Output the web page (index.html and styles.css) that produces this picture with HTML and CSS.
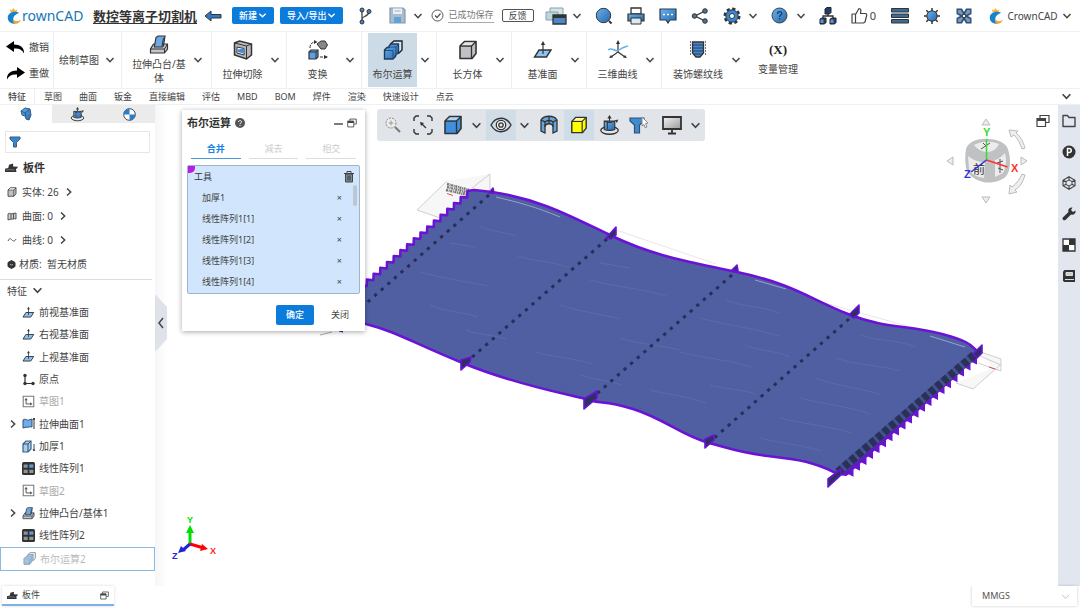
FILE: index.html
```html
<!DOCTYPE html>
<html lang="zh-CN">

<head>
    <meta charset="UTF-8">
    <meta name="viewport" content="width=device-width, initial-scale=1.0">
    <title>CrownCAD - 数控等离子切割机</title>
    <link rel="stylesheet" href="styles.css">
</head>

<body>
    <!-- 公用图标 -->
    <svg class="defs" width="0" height="0" aria-hidden="true">
        <defs>
            <linearGradient id="blue" x1="0" y1="0" x2="1" y2="1">
                <stop offset="0" stop-color="#6cb2f0" />
                <stop offset="1" stop-color="#2566a8" />
            </linearGradient>
            <linearGradient id="gray" x1="0" y1="0" x2="1" y2="1">
                <stop offset="0" stop-color="#f4f4f4" />
                <stop offset="1" stop-color="#999" />
            </linearGradient>
        </defs>
        <symbol id="i-down" viewBox="0 0 10 10"><path d="M1.5 3 5 6.7 8.5 3" fill="none" stroke="#444" stroke-width="1.5" /></symbol>
        <symbol id="i-right" viewBox="0 0 10 10"><path d="M3 1.5 6.7 5 3 8.5" fill="none" stroke="#444" stroke-width="1.5" /></symbol>
        <symbol id="i-crown" viewBox="0 0 16 18">
            <path d="M3 1.5 5 3 7 .5 8.5 3 11 2 10 5.5H4z" fill="#f6b03a" />
            <path d="M13 5.500C7 3 1 6 .8 10.500.6 14.500 4 17.500 9 17.200 5.500 14.500 5 8.500 13 5.500z" fill="#1484d2" />
            <path d="M6.500 12c2 3.500 5.500 3.500 8.500.5-1 3.500-4 5.500-8 4.500" fill="#f0a02c" />
        </symbol>
        <symbol id="i-plane" viewBox="0 0 20 20">
            <path d="M6 10h12l-4.500 7H1.500z" fill="#8fc1f2" stroke="#333" stroke-width="1.4" />
            <path d="M10 14V3" stroke="#333" stroke-width="1.2" /><path d="M10 1 7.800 5h4.400z" fill="#333" />
        </symbol>
        <symbol id="i-sketch" viewBox="0 0 16 16">
            <path d="M1.500 1.500h13v13h-13z" fill="#fff" stroke="#777" stroke-width="1.3" />
            <path d="M5 5v6h6" fill="none" stroke="#555" stroke-width="1.2" /><path d="M3 6.500 5 3.500 7 6.500M10 9l3 2-3 2" fill="#555" />
        </symbol>
        <symbol id="i-array" viewBox="0 0 16 16">
            <rect x="0" y="0" width="16" height="16" rx="2" fill="#333" />
            <path d="M2 3h5v4H2zM2 9.500h5v4H2zM9 9.500h5v4H9z" fill="#8e9499" /><path d="M9 3h5v4H9z" fill="#5b9be0" />
        </symbol>
        <symbol id="i-extrude" viewBox="0 0 20 20">
            <path d="M4.500 9 1.500 14v4h14l3-4V9z" fill="#c3c7cb" stroke="#333" stroke-width="1.2" />
            <path d="M1.500 14h14l3-5M15.500 14v4" fill="none" stroke="#333" />
            <path d="M5.500 11 7 2.500l2-1.500h7l-1.500 9.500-1 1.500h-8z" fill="#6fa8e4" stroke="#333" stroke-width="1.2" />
            <path d="m13 11.500 1.500-8.500" stroke="#333" />
        </symbol>
        <symbol id="i-bool" viewBox="0 0 20 20">
            <path d="M7.500 4 11 1h8v9l-3 3H7.500z" fill="#d7e7f6" stroke="#222" stroke-width="1.4" />
            <path d="M1.500 10 4 7.500h2V6l2-2h7.500v8.500l-3 3v1L10 19H1.500z" fill="url(#blue)" stroke="#1c3a5c" stroke-width="1.4" />
            <path d="M2 10.500h8V19M6 7h7v8M13 7l3-3" fill="none" stroke="#1f5084" />
        </symbol>
        <symbol id="i-cube" viewBox="0 0 20 20">
            <path d="M2 6 6.500 1.500H18v12L14 18.500H2z" fill="currentColor" stroke="#333" stroke-width="1.6" stroke-linejoin="round" />
            <path d="M2 6h11.500v12.500M13.500 6 18 1.500" fill="none" stroke="#333" stroke-width="1.3" />
            <path d="m3.500 5.300 3.400-3.100h9.300L13 5.300z" fill="#fff" opacity=".6" />
        </symbol>
        <symbol id="i-windows" viewBox="0 0 14 14">
            <path d="M4 4V1.500h9v7h-3" fill="none" stroke="#444" stroke-width="1.2" />
            <path d="M1 4.500h8.500v8H1z" fill="#fff" stroke="#444" stroke-width="1.2" /><path d="M1 4h8.500v3H1z" fill="#444" />
        </symbol>
        <symbol id="i-part" viewBox="0 0 16 12">
            <path d="M0 11V7l4-1 1-4 5-1.500V4l6 .5-1.500 2.500h-1L14 11z" fill="#333" /><path d="m1 8.500 5-.5 6 .5" stroke="#888" fill="none" />
        </symbol>
        <symbol id="i-turn" viewBox="0 0 24 24">
            <ellipse cx="12" cy="17.500" rx="10" ry="4.500" fill="none" stroke="#333" stroke-width="1.5" />
            <path d="M6 7h12v9.500c-3 1.500-9 1.500-12 0z" fill="url(#blue)" stroke="#333" stroke-width="1.3" />
            <path d="M6 7c3 2 9 2 12 0M12 1.500V7M9.500 7v9.500" fill="none" stroke="#333" stroke-width="1.2" /><path d="m12 0-2.500 4h5zM22 5l-4 1 2.500 3z" fill="#333" />
        </symbol>
    </svg>

    <header class="header">
        <a class="logo" href="#"><svg width="15" height="18"><use href="#i-crown" /></svg>rownCAD</a>
        <h1 class="doc-name">数控等离子切割机</h1>
        <button class="back" aria-label="返回"><svg width="18" height="12" viewBox="0 0 18 12"><path d="M7 1 1 6l6 5V8h10V4.500H7z" fill="#2e7ac8" stroke="#333" /></svg></button>
        <button class="primary">新建<svg width="9" height="9" viewBox="0 0 10 10"><path d="M1.500 3 5 6.500 8.500 3" fill="none" stroke="#fff" stroke-width="1.5" /></svg></button>
        <button class="primary">导入/导出<svg width="9" height="9" viewBox="0 0 10 10"><path d="M1.500 3 5 6.500 8.500 3" fill="none" stroke="#fff" stroke-width="1.5" /></svg></button>
        <button class="icon-btn" aria-label="版本"><svg width="14" height="18" viewBox="0 0 14 18"><path d="M4 3v11M4 12c0-3 6-2 7-7" fill="none" stroke="#444" stroke-width="1.3" /><g fill="#3b86d0" stroke="#333"><circle cx="4" cy="3" r="2" /><circle cx="11" cy="4.500" r="2" /><circle cx="4" cy="15" r="2" /></g></svg></button>
        <button class="icon-btn" aria-label="保存"><svg width="17" height="17" viewBox="0 0 17 17"><path d="M1 1h13l2 2v13H1z" fill="#a9bdd2" stroke="#8796a5" stroke-width="1.2" /><path d="M4 1.500h9V7H4z" fill="#edf2f7" /><path d="M5 10h7v6H5z" fill="#62a3d6" /><path d="M5.500 4h6" stroke="#aaa" /></svg></button>
        <button class="drop" aria-label="保存选项"><svg width="10" height="10"><use href="#i-down" /></svg></button>
        <span class="saved"><svg width="13" height="13" viewBox="0 0 13 13"><circle cx="6.500" cy="6.500" r="5.500" fill="none" stroke="#555" /><path d="m4 6.500 2 2L9.500 4.500" fill="none" stroke="#555" stroke-width="1.2" /></svg><span>已成功保存</span></span>
        <button class="feedback">反馈</button>
        <button class="icon-btn" aria-label="窗口"><svg width="22" height="18" viewBox="0 0 22 18"><path d="M5 1h13v8H5z" fill="#d3e5ea" stroke="#8ba0a8" /><path d="M1 5h12v8H1z" fill="#b8d8e0" stroke="#8ba0a8" /><path d="M8 8h13v9H8z" fill="#4c88c8" stroke="#333" stroke-width="1.3" /><path d="M8 8h13v3H8z" fill="#333" /></svg></button>
        <button class="drop" aria-label="窗口选项"><svg width="10" height="10"><use href="#i-down" /></svg></button>
        <button class="icon-btn" aria-label="搜索"><svg width="18" height="18" viewBox="0 0 18 18"><circle cx="8.500" cy="8.500" r="7.200" fill="url(#blue)" stroke="#333" /><path d="m14 14 2.500 2.500" stroke="#333" stroke-width="2" /></svg></button>
        <button class="icon-btn" aria-label="打印"><svg width="18" height="18" viewBox="0 0 18 18"><path d="M4 1h10v6H4z" fill="#fff" stroke="#333" stroke-width="1.3" /><path d="M1 7h16v7H1z" fill="url(#blue)" stroke="#333" stroke-width="1.2" /><path d="M4 11h10v6H4z" fill="#dbe9f5" stroke="#333" /></svg></button>
        <button class="icon-btn" aria-label="消息"><svg width="18" height="17" viewBox="0 0 18 17"><path d="M1 2h16v11h-6l-2 3-2-3H1z" fill="url(#blue)" stroke="#2a3c50" stroke-width="1.2" /><path d="M4 7.500h10" stroke="#fff" stroke-width="1.5" stroke-dasharray="2" /></svg></button>
        <button class="icon-btn" aria-label="分享"><svg width="18" height="16" viewBox="0 0 18 16"><path d="m14 3-10 5 10 5" fill="none" stroke="#333" stroke-width="1.3" /><g fill="#4e7396" stroke="#333"><circle cx="14" cy="3" r="2.300" /><circle cx="3.500" cy="8" r="2.300" /><circle cx="14" cy="13" r="2.300" /></g></svg></button>
        <button class="icon-btn" aria-label="设置"><svg width="18" height="18" viewBox="0 0 18 18"><circle cx="9" cy="9" r="7.200" fill="none" stroke="#333" stroke-width="2.6" stroke-dasharray="3.200 2.450" /><circle cx="9" cy="9" r="6.200" fill="#3d84c8" stroke="#293b4d" /><circle cx="9" cy="9" r="2.500" fill="#fff" stroke="#293b4d" /></svg></button>
        <button class="drop" aria-label="设置选项"><svg width="10" height="10"><use href="#i-down" /></svg></button>
        <button class="icon-btn" aria-label="帮助"><svg width="17" height="17" viewBox="0 0 17 17"><circle cx="8.500" cy="8.500" r="7.500" fill="url(#blue)" stroke="#444" /><path d="M6.500 7c0-3 4.200-3 4.200-.5 0 1.500-2.200 1.500-2.200 3.500M8.500 11v1.500" fill="none" stroke="#19426c" stroke-width="1.3" /></svg></button>
        <button class="drop" aria-label="帮助选项"><svg width="10" height="10"><use href="#i-down" /></svg></button>
        <button class="icon-btn" aria-label="组织"><svg width="18" height="18" viewBox="0 0 18 18"><path d="M9 6v3M4 12V9h10v3" fill="none" stroke="#333" stroke-width="1.3" /><path d="m6 2 2-1.500h4v5L10.500 7H6zM1 12l2-1h4v4.500L5.500 17H1zM11 12l2-1h4v4.500L15.500 17H11z" fill="#243c66" stroke="#222" /><path d="M1.500 12.500h3V16h-3zM11.500 12.500h3V16h-3z" fill="#5994cd" /></svg></button>
        <button class="like"><svg width="17" height="17" viewBox="0 0 17 17"><path d="M1 7h3.500v9H1zM4.500 7.500 8 1.500c2 0 2.200 1.500 1.500 5H15l.8 1.500L14 15l-1.500 1h-8" fill="none" stroke="#444" stroke-width="1.2" stroke-linejoin="round" /></svg>0</button>
        <button class="icon-btn" aria-label="列表"><svg width="18" height="16" viewBox="0 0 18 16"><g fill="#3a6b99" stroke="#333"><path d="M.5.5h17v3.500H.5zM.5 6h17v3.500H.5zM.5 11.500h17V15H.5z" /></g></svg></button>
        <button class="icon-btn" aria-label="亮度"><svg width="18" height="18" viewBox="0 0 18 18"><path d="M9 1v16M1 9h16M3.300 3.300l11.400 11.400M14.700 3.300 3.300 14.700" stroke="#333" stroke-width="1.5" /><circle cx="9" cy="9" r="5.200" fill="url(#blue)" stroke="#333" /></svg></button>
        <button class="icon-btn" aria-label="应用"><svg width="18" height="18" viewBox="0 0 18 18"><path d="M1.500 1.500H7L9 5l2-3.500h5.500V7L13 9l3.500 2v5.500H11L9 13l-2 3.500H1.500V11L5 9 1.500 7z" fill="#35506c" /><path d="M3 3h3l2 4-1 1-4-2zM15 3h-3l-2 4 1 1 4-2zM3 15h3l2-4-1-1-4 2zM15 15h-3l-2-4 1-1 4 2z" fill="#6f9cc8" /><circle cx="9" cy="9" r="1.800" fill="#fff" stroke="#333" /></svg></button>
        <button class="account"><svg width="15" height="18"><use href="#i-crown" /></svg>CrownCAD<svg width="10" height="10"><use href="#i-down" /></svg></button>
    </header>

    <div class="ribbon">
        <div class="history">
            <button><svg width="19" height="13" viewBox="0 0 19 13"><path d="M8 0 0 5.500 8 11V7.500c5-.5 8 1 10 5 .5-6-4-9-10-9z" /></svg>撤销</button>
            <button><svg width="19" height="13" viewBox="0 0 19 13"><path d="m11 0 8 5.500L11 11V7.500c-5-.5-8 1-10 5-.5-6 4-9 10-9z" /></svg>重做</button>
        </div>
        <div class="group sketch">
            <button class="tool">绘制草图</button>
            <button class="more" aria-label="草图选项"><svg width="10" height="10"><use href="#i-down" /></svg></button>
        </div>
        <div class="group wide">
            <button class="tool"><svg width="20" height="20"><use href="#i-extrude" /></svg><span>拉伸凸台/基体</span></button>
            <button class="more" aria-label="拉伸选项"><svg width="10" height="10"><use href="#i-down" /></svg></button>
        </div>
        <div class="group">
            <button class="tool"><svg width="20" height="20" viewBox="0 0 20 20"><path d="m1.500 3 5-2 12 3v11l-5 4-12-4z" fill="#b5b9bd" stroke="#333" stroke-width="1.5" /><path d="m1.500 3 12 3v13m0-13 5-2" fill="none" stroke="#333" /><path d="m4 7 7 1.500V15L4 13z" fill="#fff" stroke="#333" /><path d="m5 9.500 5.500-1v5L5 12z" fill="#3f8cda" /></svg><span>拉伸切除</span></button>
            <button class="more" aria-label="切除选项"><svg width="10" height="10"><use href="#i-down" /></svg></button>
        </div>
        <div class="group">
            <button class="tool"><svg width="20" height="20" viewBox="0 0 20 20"><path d="M2 8c0-4 2-6 6-6M12 17h7" fill="none" stroke="#333" stroke-dasharray="3 1" /><path d="M6 0 9.500 2 6 4zM16 15l4 2-4 2z" fill="#333" /><path d="m9 4 4-3h4l2.500 4L17 9h-4z" fill="#888" stroke="#333" /><path d="m1 12 2-2h7v7l-2 2H1z" fill="#5f9fe0" stroke="#333" stroke-width="1.2" /><path d="M1 12h7v7m0-7 2-2" fill="none" stroke="#333" /></svg><span>变换</span></button>
            <button class="more" aria-label="变换选项"><svg width="10" height="10"><use href="#i-down" /></svg></button>
        </div>
        <div class="group">
            <button class="tool active"><svg width="20" height="20"><use href="#i-bool" /></svg><span>布尔运算</span></button>
            <button class="more" aria-label="布尔选项"><svg width="10" height="10"><use href="#i-down" /></svg></button>
        </div>
        <div class="group">
            <button class="tool"><svg class="gray-cube" width="20" height="20"><use href="#i-cube" /></svg><span>长方体</span></button>
            <button class="more" aria-label="长方体选项"><svg width="10" height="10"><use href="#i-down" /></svg></button>
        </div>
        <div class="group">
            <button class="tool"><svg width="20" height="20"><use href="#i-plane" /></svg><span>基准面</span></button>
            <button class="more" aria-label="基准面选项"><svg width="10" height="10"><use href="#i-down" /></svg></button>
        </div>
        <div class="group">
            <button class="tool"><svg width="20" height="20" viewBox="0 0 20 20"><path d="M10 2v10l-7 5m7-5 7 5" fill="none" stroke="#333" stroke-width="1.2" /><path d="m10 0-2 4h4zM1 18l4-.5L3 15zm18 0-4-.5 2-2.500z" fill="#333" /><path d="M0 10c4-4 7 3 11 0s5-3 9-4" fill="none" stroke="#62b2ec" stroke-width="1.5" /></svg><span>三维曲线</span></button>
            <button class="more" aria-label="曲线选项"><svg width="10" height="10"><use href="#i-down" /></svg></button>
        </div>
        <div class="group last">
            <button class="tool"><svg width="20" height="20" viewBox="0 0 20 20"><path d="M4.500 2h11v11L12 17H8l-3.500-4z" fill="#4b88c8" stroke="#333" stroke-width="1.3" /><path d="M4.500 5h11m-11 3h11m-11 3h11m-10 3h9" stroke="#1e4166" /><path d="M2.500 1v14m15-14v14" stroke="#777" stroke-dasharray="2 1" /></svg><span>装饰螺纹线</span></button>
            <button class="more" aria-label="螺纹选项"><svg width="10" height="10"><use href="#i-down" /></svg></button>
        </div>
        <button class="tool variable"><b>(X)</b><span>变量管理</span></button>
    </div>

    <nav class="tabs">
        <button class="active">特征</button>
        <button>草图</button>
        <button>曲面</button>
        <button>钣金</button>
        <button>直接编辑</button>
        <button>评估</button>
        <button>MBD</button>
        <button>BOM</button>
        <button>焊件</button>
        <button>渲染</button>
        <button>快速设计</button>
        <button>点云</button>
        <button class="fold" aria-label="收起"><svg width="11" height="11"><use href="#i-down" /></svg></button>
    </nav>

    <main class="main">
        <aside class="side">
            <div class="side-tabs">
                <button class="active" aria-label="特征树"><svg width="12" height="14" viewBox="0 0 12 14"><path d="m1 4 4-3 5 1 1 6-2 5-3-1-1-3-3-1z" fill="url(#blue)" stroke="#2b5d8c" /><path d="m1 4 4 2 5-4M5 6l1 3" fill="none" stroke="#2b5d8c" /></svg></button>
                <button aria-label="配置"><svg width="15" height="15"><use href="#i-turn" /></svg></button>
                <button aria-label="外观"><svg width="13" height="13" viewBox="0 0 13 13"><circle cx="6.500" cy="6.500" r="5.800" fill="#fff" stroke="#444" /><path d="M6.500.7v5.800H.7A5.800 5.800 0 0 1 6.500.7zM6.500 6.500h5.800a5.800 5.800 0 0 1-5.800 5.800z" fill="#2b7cd0" /></svg></button>
            </div>
            <label class="filter">
                <svg width="12" height="12" viewBox="0 0 12 12"><path d="M1 1h10v2L7.500 6.500V11h-3V6.500L1 3z" fill="#3585d0" stroke="#3b5d80" /></svg>
                <input type="text" aria-label="筛选">
            </label>
            <h2 class="part"><svg width="13" height="10"><use href="#i-part" /></svg>板件</h2>
            <ul class="info">
                <li><svg class="gray-cube" width="10" height="10"><use href="#i-cube" /></svg>实体: 26<svg width="10" height="10"><use href="#i-right" /></svg></li>
                <li><svg width="10" height="10" viewBox="0 0 10 10"><path d="M1 3c2-2 3 1 5-.5L9 2v6c-2-1-3 1-5 0L1 9z" fill="#ccc" stroke="#555" /><path d="M4 2.500V8m2.500-5.500V8" stroke="#555" /></svg>曲面: 0<svg width="10" height="10"><use href="#i-right" /></svg></li>
                <li><svg width="10" height="10" viewBox="0 0 10 10"><path d="M1 6c2-4 3-2 4-1s2.500 2 4-1" fill="none" stroke="#555" /></svg>曲线: 0<svg width="10" height="10"><use href="#i-right" /></svg></li>
                <li class="material"><svg width="9" height="9" viewBox="0 0 9 9"><path d="m1 2.500 3.500-2 3.500 2v4l-3.500 2-3.500-2z" fill="#333" stroke="#333" /><path d="M3 4.500 4.500 5 6 4.500" stroke="#aaa" fill="none" /></svg>材质:&nbsp; 暂无材质</li>
            </ul>
            <h3 class="tree-title">特征<svg width="11" height="11"><use href="#i-down" /></svg></h3>
            <ul class="tree">
                <li><svg width="13" height="13"><use href="#i-plane" /></svg>前视基准面</li>
                <li><svg width="13" height="13"><use href="#i-plane" /></svg>右视基准面</li>
                <li><svg width="13" height="13"><use href="#i-plane" /></svg>上视基准面</li>
                <li><svg width="13" height="13" viewBox="0 0 13 13"><path d="M3 2.500v8h8" fill="none" stroke="#333" stroke-width="1.2" /><g fill="#333"><circle cx="3" cy="2.500" r="1.700" /><circle cx="3" cy="10.500" r="1.700" /><circle cx="11" cy="10.500" r="1.700" /></g></svg>原点</li>
                <li class="off"><svg width="13" height="13"><use href="#i-sketch" /></svg>草图1</li>
                <li class="open"><svg width="10" height="10"><use href="#i-right" /></svg><svg width="13" height="13" viewBox="0 0 13 13"><path d="M1 3c3-2 4 1 6 0l3-1v8c-3-1-3 1-5 0l-4 1z" fill="#70acea" stroke="#334f70" /><path d="M12 1v11m-1-9 1-2 1 2" fill="none" stroke="#333" /></svg>拉伸曲面1</li>
                <li><svg width="13" height="13" viewBox="0 0 13 13"><path d="m1 4 3-3h5v8l-3 3H1z" fill="#a9cdf0" stroke="#3a5f85" stroke-width="1.2" /><path d="M1 4h5v8m0-8 3-3m3 3v7m-1-2 1 2 1-2" fill="none" stroke="#3a4f66" /></svg>加厚1</li>
                <li><svg width="13" height="13"><use href="#i-array" /></svg>线性阵列1</li>
                <li class="off"><svg width="13" height="13"><use href="#i-sketch" /></svg>草图2</li>
                <li class="open"><svg width="10" height="10"><use href="#i-right" /></svg><svg width="13" height="13"><use href="#i-extrude" /></svg>拉伸凸台/基体1</li>
                <li><svg width="13" height="13"><use href="#i-array" /></svg>线性阵列2</li>
                <li class="editing"><svg width="13" height="13"><use href="#i-bool" /></svg>布尔运算2</li>
            </ul>
        </aside>

        <section class="view">
            <!-- 三维模型 -->
            <svg class="model" viewBox="155 105 903 503" preserveAspectRatio="xMinYMin meet">
                <!-- 基准面 -->
                <g fill="#f7f7f7" stroke="#bbb" stroke-width=".7">
                    <path d="M417 210l30-29 43-7v16l-50 28z" stroke="none" />
                    <path d="M417 210l30-29M417 210l23 8M472 188l18-14v17" fill="none" />
                    <path d="M978 351l23 8v12l-6-2M980 356l21 9M956 383l17 6 27-24M978 363l20 7" />
                    <path d="M616 230l100 34M825 303l125 35" fill="none" stroke="#ddd" />
                </g>
                <path d="M447 184l22 6M447 187l23 6M446 190l22 5" stroke="#777" stroke-width="2.5" stroke-dasharray="2 .7 1 .6" fill="none" />
                <path d="M447 193.500l6 2M989 367l6 2" stroke="#e34a5a" />

                <!-- 板面 -->
                <path fill="#4f5fa1" stroke="#6b12d6" stroke-width="2.5" stroke-linejoin="round" d="M474 190l18 2C540 199 572 217 612 236S680 260 737 272 810 299 848 314 908 325 942 334 970 347 979 352L836 473C811 461 800 460 768 456S736 450 709 443 665 419 633 409 605 405 589 400 522 387 465 364 400 333 366 324L330 314 360 292
                    l.2-6.500 6.500.6.2-6.500 6.500.6.2-6.500 6.500.6.2-6.500 6.500.6.2-6.500 6.500.6.2-6.500 6.500.6.2-6.500 6.500.6.2-6.500 6.500.6.2-6.500 6.500.6.2-6.500 6.500.6.2-6.500 6.500.6.2-6.500 6.500.6.2-6.500 6.500.6.2-6.500 6.500.6.2-6.500 6.500.6.2-6.500 6.500.6.2-6.500z" />
                <path d="M496 197c25 6 40 10 64 20M755 280l31 9M930 336l35 11" fill="none" stroke="#aab3d4" stroke-width=".8" />
                <g fill="none" stroke="#7580b8" stroke-width=".6" opacity=".6">
                    <path d="M480 226c12 6 20 5 36 10M450 243l25 4M518 256c18 6 35 5 51 12M420 272c25 7 44 9 68 14M430 305c14 7 30 6 48 12M466 330c12 5 24 4 40 9" />
                    <path d="M600 263l30 5M560 305c20 7 42 9 60 14M590 280c30 8 50 8 76 16M535 352c22 6 34 5 58 12M580 375c14 5 28 5 42 10M620 338c20 7 42 7 60 12" />
                    <path d="M726 300c14 7 36 6 54 13M700 318c30 8 48 9 80 18M745 345c12 6 30 5 45 12M680 352c22 6 50 8 72 15M650 390c18 5 34 5 56 13M710 385c14 4 30 4 46 9" />
                    <path d="M860 335c20 7 36 4 55 12M835 358c25 8 40 6 65 13M815 378c18 7 44 10 64 16M800 398c22 6 48 8 70 16M780 418c24 6 48 8 72 15M760 438c24 6 36 6 62 13" />
                </g>

                <!-- 插槽 -->
                <g fill="none" stroke="#262f5c" stroke-width="3" stroke-dasharray="3.300 5.500">
                    <path d="M489 195L362 307" />
                    <path d="M607 239L470 359" />
                    <path d="M732 275L592 398" />
                    <path d="M849 319L712 440" />
                </g>

                <!-- 端部齿条 -->
                <path fill="#5a20b8" stroke="#6b12d6" stroke-width="2" d="M976 353v10
                    l-4-2-2.500 1.900v6l-4-2-2.500 1.900v6l-4-2-2.500 1.900v6l-4-2-2.500 1.900v6l-4-2-2.500 1.900v6l-4-2-2.500 1.900v6l-4-2-2.500 1.900v6l-4-2-2.500 1.900v6l-4-2-2.500 1.900v6l-4-2-2.500 1.900v6l-4-2-2.500 1.900v6l-4-2-2.500 1.900v6l-4-2-2.500 1.900v6l-4-2-2.500 1.900v6l-4-2-2.500 1.900v6l-4-2-2.500 1.900v6l-4-2-2.500 1.900v6l-4-2-2.500 1.900v6l-4-2-2.500 1.900v6l-4-2-2.500 1.900L836 474z" />
                <path d="M974 355L838 472" stroke="#44538f" stroke-width="8" />
                <path d="M974 355L838 472" stroke="#293158" stroke-width="8" stroke-dasharray="5.800 2.900" />

                <!-- 肋板端头 -->
                <g fill="#2c3260" stroke="#6b12d6" stroke-width="1.6" stroke-linejoin="round">
                    <path d="M489 193l4-5 1 5zM606 238l10-11v8l-5 4zM732 270l5-5 1 6zM849 315l10-10v8l-5 5zM973 354l9-9v8l-5 5z" />
                    <path d="M461 360l10-3-1 5-9 8zM584 399l13-8v7l-13 11zM705 439l9-4v5l-9 8zM828 479l13-10v6l-13 12z" />
                </g>
                <path d="M338 329l5 3-4-1z" stroke="#3b22b8" />
                <path d="M320 335l12-3" stroke="#aaa" />

                <!-- 坐标轴 -->
                <g class="axis">
                    <path d="M190 545v-13" stroke="#0d0" stroke-width="3" /><path d="M190 525l-4 8h8z" fill="#0d0" />
                    <path d="M190 544l12 3.500" stroke="#f00" stroke-width="3" /><path d="M208 549l-8 2 2-7z" fill="#f00" />
                    <path d="M190 544l-7 6" stroke="#22d" stroke-width="3" /><path d="M178 553l3-7 5 5z" fill="#22d" />
                    <text x="187" y="523" fill="#0d0">Y</text>
                    <text x="210" y="554" fill="#f22">X</text>
                    <text x="172" y="559" fill="#22d">Z</text>
                </g>
            </svg>

            <button class="handle" aria-label="收起侧栏"><svg width="12" height="56" viewBox="0 0 12 56"><path d="M0 0h1l11 12v32L1 56H0z" fill="#dfe3e9" /><path d="M8 23 4 28l4 5" fill="none" stroke="#444" stroke-width="1.5" /></svg></button>

            <!-- 视图工具条 -->
            <div class="viewbar">
                <button aria-label="缩放"><svg width="18" height="18" viewBox="0 0 18 18"><circle cx="7" cy="7" r="5" fill="#eee" stroke="#888" stroke-dasharray="2 1" /><path d="m11 11 5 5" stroke="#777" stroke-width="2" /><path d="M7 4.500v5M4.500 7h5" stroke="#999" /></svg></button>
                <button aria-label="适合窗口"><svg width="20" height="20" viewBox="0 0 20 20"><path d="M1 6V3l2-2h3M14 1h3l2 2v3M19 14v3l-2 2h-3M6 19H3l-2-2v-3" fill="none" stroke="#333" stroke-width="1.4" /><path d="m8 8 5 5" stroke="#333" stroke-width="1.3" /><path d="m7 7 1 4 3-3z" fill="#333" /></svg></button>
                <button class="blue-cube" aria-label="显示样式"><svg width="20" height="20"><use href="#i-cube" /></svg></button>
                <button class="drop" aria-label="样式选项"><svg width="11" height="11"><use href="#i-down" /></svg></button>
                <button class="on" aria-label="可见性"><svg width="22" height="16" viewBox="0 0 22 16"><path d="M1 8c5-9 15-9 20 0-5 9-15 9-20 0z" fill="none" stroke="#333" stroke-width="1.4" /><circle cx="11" cy="8" r="4.700" fill="#fff" stroke="#333" stroke-width="1.3" /><circle cx="11" cy="8" r="2.200" fill="#dfe9f0" stroke="#333" stroke-width="1.3" /></svg></button>
                <button class="drop" aria-label="可见性选项"><svg width="11" height="11"><use href="#i-down" /></svg></button>
                <button aria-label="剖视"><svg width="20" height="20" viewBox="0 0 20 20"><path d="M2 5c3-5 13-5 16 0v11l-4 2v-7c-1-3-7-3-8 0v7l-4-2z" fill="#65a4df" stroke="#333" stroke-width="1.3" /><path d="m2 5 4 2v5m12-7-4 2v5M10 1v7M6 7c2-2 6-2 8 0" fill="none" stroke="#333" stroke-width="1.3" /></svg></button>
                <button class="on yellow-cube" aria-label="着色"><svg width="18" height="18"><use href="#i-cube" /></svg></button>
                <button aria-label="旋转"><svg width="21" height="21"><use href="#i-turn" /></svg></button>
                <button aria-label="选择过滤"><svg width="20" height="20" viewBox="0 0 20 20"><path d="M1 3h14v3l-4.500 4v8h-5v-8L1 6z" fill="#3f8bd0" stroke="#33516e" stroke-width="1.2" /><path d="m13 2 6 6-2.500.5L18 12l-2 .5-1-3-2 1.500z" fill="#fff" stroke="#888" /></svg></button>
                <button class="screen" aria-label="显示"><svg width="20" height="20" viewBox="0 0 20 20"><path d="M1 2h18v12H1z" fill="url(#gray)" stroke="#333" stroke-width="1.8" /><path d="M10 14v4M6 18.500h8" stroke="#333" stroke-width="1.8" /></svg></button>
                <button class="drop" aria-label="显示选项"><svg width="11" height="11"><use href="#i-down" /></svg></button>
            </div>

            <!-- 视图方块 -->
            <div class="orient">
                <svg width="88" height="90" viewBox="0 0 88 90">
                    <g fill="#eee" stroke="#bbb">
                        <path d="m42 2 4 6h-8zM42 86l4-6h-8zM3 44l6-4v8zM83 44l-6-4v8z" />
                        <path d="m65 13 9 1-2 2c5 4 7 8 9 15l-3 1c-2-6-4-10-8-14l-3 2zM65 77l1-9 2 2c5-4 8-8 10-13l3 1c-2 7-5 12-10 15l2 2z" />
                    </g>
                    <path d="M22 32c2-7 12-11 22-10 8 0 16 3 19 8 4 8 4 22 0 28-4 6-16 9-24 7-8-2-15-7-17-14-1-7-1-13 0-19z" fill="#c0c1c3" />
                    <path d="M30 28c8-4 18-4 25-1-2 5-7 8-12 8-5 0-10-3-13-7zM24 39c5 4 11 6 17 7l-1 15c-7-1-14-4-15-9zM51 43c4-1 7-4 10-7 2 8 1 15-2 20l-8 4z" fill="#ececed" />
                    <path d="m37 32 9-6m-7 0 4 4M56 42v14m-3-10 6-2m-5 7 5 2" stroke="#555" fill="none" />
                    <text x="29" y="57" font-size="12" fill="#333">前</text>
                    <path d="M42.500 43V22" stroke="#3d3" stroke-width="1.5" /><path d="m42.500 43 21 7" stroke="#f33" stroke-width="1.5" /><path d="M42.500 43 27 55" stroke="#33d" stroke-width="1.5" />
                    <g class="axis-name"><text x="39" y="19" fill="#3d3">Y</text><text x="67" y="55" fill="#f33">X</text><text x="20" y="61" fill="#33d">Z</text></g>
                </svg>
                <button aria-label="视图窗口"><svg width="14" height="14"><use href="#i-windows" /></svg></button>
            </div>

            <!-- 布尔运算面板 -->
            <div class="dialog">
                <div class="dialog-head">
                    <h2>布尔运算</h2>
                    <svg width="10" height="10" viewBox="0 0 10 10"><circle cx="5" cy="5" r="5" fill="#555" /><path d="M3.500 4c0-2 3-2 3-.2C6.500 5 5 4.800 5 6.200M5 7v1" fill="none" stroke="#fff" /></svg>
                    <button class="min" aria-label="最小化"><svg width="9" height="9" viewBox="0 0 9 9"><path d="M0 6h9" stroke="#444" stroke-width="1.4" /></svg></button>
                    <button aria-label="浮动"><svg width="10" height="10"><use href="#i-windows" /></svg></button>
                </div>
                <div class="dialog-tabs">
                    <button class="active">合并</button>
                    <button>减去</button>
                    <button>相交</button>
                </div>
                <div class="picker">
                    <div class="picker-head">工具<button aria-label="清空"><svg width="10" height="12" viewBox="0 0 10 12"><path d="M0 2.500h10M3 2V.5h4V2" fill="none" stroke="#444" /><path d="M1.500 3h7v8h-7z" fill="#7d8c9a" stroke="#444" /><path d="M4 4.500v5m2-5v5" stroke="#333" /></svg></button></div>
                    <ul>
                        <li>加厚1<button aria-label="移除">×</button></li>
                        <li>线性阵列1[1]<button aria-label="移除">×</button></li>
                        <li>线性阵列1[2]<button aria-label="移除">×</button></li>
                        <li>线性阵列1[3]<button aria-label="移除">×</button></li>
                        <li>线性阵列1[4]<button aria-label="移除">×</button></li>
                    </ul>
                </div>
                <div class="dialog-foot">
                    <button class="ok">确定</button>
                    <button>关闭</button>
                </div>
            </div>
        </section>

        <nav class="rail">
            <button aria-label="文件"><svg width="14" height="14" viewBox="0 0 14 14"><path d="M1 1.500h4.500l1.500 2h6v9H1z" fill="none" stroke="#444" stroke-width="1.4" stroke-linejoin="round" /></svg></button>
            <button aria-label="零件库"><svg width="14" height="14" viewBox="0 0 14 14"><circle cx="7" cy="7" r="6.500" fill="#333" /><path d="M5.500 11V3.500H7c3 0 3 4 0 4H5.500" fill="none" stroke="#fff" stroke-width="1.5" /></svg></button>
            <button aria-label="模型库"><svg width="14" height="14" viewBox="0 0 14 14"><path d="m7 .7 6 3.500v5.600l-6 3.500-6-3.500V4.200zM1 4.200l12 5.600M13 4.200 1 9.800M7 .7V4m0 6v3.300" fill="none" stroke="#444" stroke-width="1.1" /><path d="m7 4 3 1.500v3L7 10 4 8.500v-3z" fill="#e2e7ef" stroke="#444" /></svg></button>
            <button aria-label="工具"><svg width="14" height="14" viewBox="0 0 14 14"><path d="M13.500 3.500 11 5 9 3l1.500-2.500C7.500 0 5.500 2.500 6.500 5L.8 10.500c-1 2 1 3.500 2.700 2.500L9 7.500c2.500 1 5-1 4.500-4z" fill="#333" /></svg></button>
            <button aria-label="纹理"><svg width="14" height="14" viewBox="0 0 14 14"><path d="M1 1h12v12H1z" fill="#fff" stroke="#333" stroke-width="1.3" /><path d="M7 1h6v6H7zM1 7h6v6H1z" fill="#333" /></svg></button>
            <button aria-label="手册"><svg width="14" height="14" viewBox="0 0 14 14"><path d="M1 2.500 2.500 1H13v12H2.500L1 12z" fill="#333" /><path d="M4 3.500h6.500v3H4zM3 10.500h9" fill="#ccc" stroke="#ddd" /></svg></button>
        </nav>
    </main>

    <footer class="status">
        <button class="doc-tab"><svg width="11" height="9"><use href="#i-part" /></svg>板件<svg class="pop" width="9" height="9"><use href="#i-windows" /></svg></button>
        <label class="unit">
            <select aria-label="单位">
                <option>MMGS</option>
            </select>
            <svg width="9" height="9" viewBox="0 0 10 10"><path d="M1 3l4 4 4-4" fill="none" stroke="#bbb" /></svg>
        </label>
    </footer>
</body>

</html>
```
FILE: styles.css
```css
* {
    box-sizing: border-box;
}
body {
    display: flex;
    flex-direction: column;
    height: 100vh;
    margin: 0;
    overflow: hidden;
    background: #fff;
    color: #444;
    font: 10px/14px "Noto Sans", "Noto Sans CJK SC", sans-serif;
}
button {
    display: flex;
    align-items: center;
    justify-content: center;
    padding: 0;
    border: 0;
    background: none;
    color: inherit;
    font: inherit;
    white-space: nowrap;
}
svg {
    flex: none;
}
ul, h1, h2, h3 {
    margin: 0;
    padding: 0;
    list-style: none;
}
.defs {
    position: absolute;
}
.gray-cube {
    color: #bfc1c4;
}
.blue-cube {
    color: #3f8fdc;
}
.yellow-cube {
    color: #ff0;
}

/* 顶部栏 */
.header {
    display: flex;
    flex: none;
    align-items: center;
    height: 32px;
    padding-left: 7px;
    border-bottom: 1px solid #eef0f2;
}
.logo {
    display: flex;
    align-items: center;
    width: 86px;
    color: #1a75b8;
    font-size: 14px;
    line-height: 18px;
    text-decoration: none;
}
.doc-name {
    width: 108px;
    color: #333;
    font-size: 13px;
    line-height: 18px;
    text-decoration: underline;
    text-underline-offset: 2px;
    white-space: nowrap;
}
.back {
    width: 24px;
    margin-right: 7px;
}
.primary {
    gap: 1px;
    height: 17px;
    margin-right: 6px;
    padding: 0 7px;
    border-radius: 2px;
    background: #0b7bdc;
    color: #fff;
    font-size: 9px;
    font-weight: 500;
}
.icon-btn {
    width: 32px;
    height: 24px;
}
.drop {
    justify-content: flex-start;
    width: 16px;
    height: 24px;
}
.saved {
    display: flex;
    align-items: center;
    gap: 4px;
    margin-left: 2px;
    color: #777;
    font-size: 9px;
}
.saved span {
    border-bottom: 1px solid #aaa;
}
.feedback {
    width: 32px;
    height: 13px;
    margin: 0 6px 0 8px;
    border: 1px solid #555;
    border-radius: 2px;
    font-size: 9px;
}
.like {
    gap: 2px;
    width: 40px;
    height: 24px;
    font-size: 11px;
}
.account {
    gap: 4px;
    padding-left: 9px;
}

/* 功能区 */
.ribbon {
    display: flex;
    flex: none;
    height: 56px;
}
.history {
    display: flex;
    flex-direction: column;
    justify-content: space-around;
    width: 53px;
    padding: 2px 0;
}
.history button {
    gap: 4px;
    padding-left: 2px;
}
.group {
    display: flex;
    align-items: center;
    width: 75px;
    padding-left: 6px;
    border-left: 1px solid #eee;
}
.group.sketch {
    width: 68px;
    padding-left: 2px;
}
.group.wide {
    width: 90px;
}
.group.last {
    width: 86px;
}
.tool {
    flex-direction: column;
    gap: 7px;
    width: 49px;
    height: 54px;
}
.sketch .tool {
    width: 46px;
}
.wide .tool {
    gap: 2px;
    width: 62px;
    white-space: normal;
}
.wide span {
    width: 56px;
}
.last .tool {
    width: 60px;
}
.tool.active {
    background: #cddbe6;
}
.tool.variable {
    gap: 4px;
    width: 62px;
}
.variable b {
    color: #222;
    font: bold 13px/16px "Liberation Serif", serif;
}
.more {
    width: 16px;
    height: 24px;
}

/* 选项卡 */
.tabs {
    display: flex;
    flex: none;
    gap: 1px;
    height: 17px;
    border: solid #eef0f2;
    border-width: 1px 0;
    font-size: 9px;
}
.tabs button {
    padding: 0 8px;
}
.tabs .active {
    border-right: 1px solid #eee;
    font-weight: 500;
}
.tabs .fold {
    margin-left: auto;
}

.main {
    display: flex;
    flex: 1;
    min-height: 0;
}

/* 特征树 */
.side {
    display: flex;
    flex: none;
    flex-direction: column;
    width: 155px;
    padding-bottom: 15px;
}
.side-tabs {
    display: flex;
    height: 18px;
    margin-bottom: 8px;
    background: #ebebeb;
}
.side-tabs button {
    flex: 1;
}
.side-tabs .active {
    background: #fff;
}
.filter {
    display: flex;
    align-items: center;
    height: 22px;
    margin: 0 5px 2px;
    padding: 0 3px;
    border: 1px solid #e6e6e6;
}
.filter input {
    width: 100%;
    border: 0;
    outline: 0;
    background: none;
    font: inherit;
}
.part {
    display: flex;
    align-items: center;
    gap: 5px;
    height: 25px;
    padding-left: 5px;
    color: #333;
    font-size: 11px;
}
.info {
    margin-right: 3px;
    padding-bottom: 3px;
    border-bottom: 1px solid #ddd;
}
.info li {
    display: flex;
    align-items: center;
    gap: 5px;
    height: 24px;
    padding-left: 7px;
}
.info .material {
    gap: 3px;
}
.tree-title {
    display: flex;
    align-items: center;
    gap: 5px;
    height: 21px;
    padding-left: 7px;
    font-size: 10px;
    font-weight: normal;
}
.tree {
    display: flex;
    flex: 1;
    flex-direction: column;
}
.tree li {
    display: flex;
    flex: 1;
    align-items: center;
    gap: 4px;
    padding-left: 22px;
}
.tree .open {
    padding-left: 8px;
}
.tree .off {
    color: #aaa;
}
.tree .editing {
    border: 1px solid #8ab8de;
    color: #bbb;
}
.editing svg {
    opacity: .5;
}

/* 视图区 */
.view {
    position: relative;
    flex: 1;
    min-width: 0;
    background: linear-gradient(to right, #f5f6f7, #fff 12px);
}
.model {
    position: absolute;
    top: 0;
    left: 0;
    width: 100%;
}
.axis text {
    font: bold 9px "Liberation Sans", sans-serif;
}
.axis-name text {
    font: bold 11px "Liberation Sans", sans-serif;
}
.handle {
    position: absolute;
    top: 190px;
    left: 0;
}
.viewbar {
    position: absolute;
    top: 4px;
    left: 222px;
    display: flex;
    align-items: center;
    height: 32px;
    padding-left: 1px;
    border-radius: 3px;
    background: #e1e5ea;
}
.viewbar button {
    width: 30px;
    height: 30px;
}
.viewbar .drop {
    width: 18px;
    padding-left: 3px;
}
.viewbar .on {
    background: #d0dde7;
}
.viewbar .screen {
    margin-left: 3px;
}
.orient {
    position: absolute;
    top: 12px;
    right: 8px;
    display: flex;
    align-items: flex-start;
    gap: 4px;
}
.orient button {
    margin-top: -3px;
}

/* 弹出面板 */
.dialog {
    position: absolute;
    top: 5px;
    left: 27px;
    width: 183px;
    padding: 0 5px 6px;
    background: #fff;
    box-shadow: 0 1px 5px rgba(0, 0, 0, .35);
    font-size: 9px;
}
.dialog-head {
    display: flex;
    align-items: center;
    gap: 4px;
    height: 25px;
    padding-right: 3px;
}
.dialog-head h2 {
    color: #333;
    font-size: 11px;
    font-weight: 600;
}
.dialog-head .min {
    margin-left: auto;
}
.dialog-tabs {
    display: flex;
    gap: 8px;
    margin: 4px 4px 6px;
}
.dialog-tabs button {
    flex: 1;
    height: 20px;
    border-bottom: 1px solid #ddd;
    color: #ccc;
}
.dialog-tabs .active {
    border-color: #4a9be6;
    color: #1683e6;
    font-weight: bold;
}
.picker {
    position: relative;
    padding-bottom: 1px;
    border: 1px solid #9fb4c8;
    border-radius: 2px;
    background: #d1e6fc;
}
/* 选择框颜色角标 */
.picker::before {
    content: "";
    position: absolute;
    top: 0;
    left: 0;
    width: 7px;
    height: 7px;
    border-bottom-right-radius: 5px;
    background: #b41ee8;
}
/* 滚动条滑块 */
.picker::after {
    content: "";
    position: absolute;
    top: 19px;
    right: 2px;
    width: 4px;
    height: 21px;
    border-radius: 2px;
    background: #bac8d6;
}
.picker-head {
    display: flex;
    align-items: center;
    justify-content: space-between;
    height: 21px;
    padding: 0 5px 0 6px;
    color: #333;
}
.picker li {
    display: flex;
    align-items: center;
    justify-content: space-between;
    height: 21px;
    padding: 0 17px 0 14px;
}
.dialog-foot {
    display: flex;
    gap: 6px;
    justify-content: flex-end;
    margin-top: 11px;
}
.dialog-foot button {
    width: 40px;
    height: 20px;
}
.dialog-foot .ok {
    width: 38px;
    border-radius: 2px;
    background: #0b7bdc;
    color: #fff;
    font-weight: 500;
}

/* 右侧工具栏 */
.rail {
    display: flex;
    flex: none;
    flex-direction: column;
    width: 22px;
    background: #e2e7ef;
}
.rail button {
    height: 31px;
}

/* 底部栏 */
.status {
    display: flex;
    flex: none;
    justify-content: space-between;
    height: 22px;
    padding: 0 3px 2px 2px;
    font-size: 9px;
}
.doc-tab {
    gap: 4px;
    width: 112px;
    padding: 0 5px;
    border-bottom: 2px solid #7fb2e2;
    box-shadow: 0 0 3px rgba(0, 0, 0, .15);
}
.doc-tab .pop {
    margin-left: auto;
}
.unit {
    display: flex;
    align-items: center;
    width: 105px;
    padding: 0 7px 0 10px;
    box-shadow: 0 0 3px rgba(0, 0, 0, .2);
}
.unit select {
    flex: 1;
    padding: 0;
    border: 0;
    background: none;
    color: #555;
    font: inherit;
    appearance: none;
}
```
